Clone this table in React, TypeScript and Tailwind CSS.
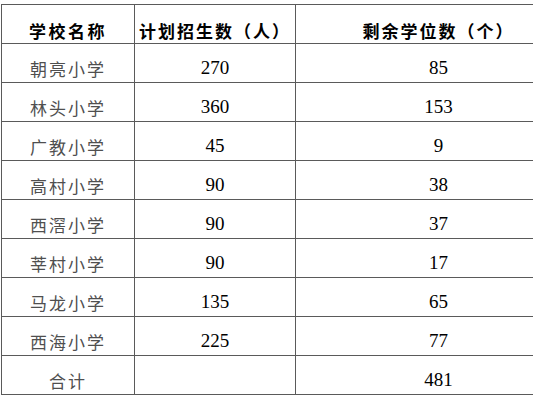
const rows: [string, string, string][] = [
  ["朝亮小学", "270", "85"],
  ["林头小学", "360", "153"],
  ["广教小学", "45", "9"],
  ["高村小学", "90", "38"],
  ["西滘小学", "90", "37"],
  ["莘村小学", "90", "17"],
  ["马龙小学", "135", "65"],
  ["西海小学", "225", "77"],
];

const cjk = "font-['Noto_Sans_CJK_SC',sans-serif]";
const num = "font-['Liberation_Serif',serif] text-[19px] text-black";
const cell = "flex h-full items-center justify-center pt-[11px] border-r border-[#5a5a5a]";

function Row({ name, plan, left }: { name: string; plan: string; left: string }) {
  return (
    <div className="flex h-[39px] border-b border-[#5a5a5a]">
      <div className={`${cell} w-[133px] ${cjk} text-[17px] tracking-[2px] text-[#4f4f4f]`}>{name}</div>
      <div className={`${cell} w-[161px] ${num}`}>{plan}</div>
      <div className={`${cell} w-[286px] ${num}`}>{left}</div>
    </div>
  );
}

export default function App() {
  return (
    <div className="h-[400px] w-[533px] overflow-hidden bg-white">
      <div className="ml-[1px] mt-[4px] w-[581px] border-l border-t border-[#5a5a5a]">
        <div className={`flex h-[39px] border-b border-[#5a5a5a] ${cjk} text-[17px] font-bold text-black`}>
          <div className={`${cell} w-[133px] pt-[13px] tracking-[2.5px]`}>学校名称</div>
          <div className={`${cell} w-[161px] pt-[13px] tracking-[2px]`}>计划招生数（人）</div>
          <div className={`${cell} w-[286px] pt-[13px] tracking-[2px]`}>剩余学位数（个）</div>
        </div>
        {rows.map(([n, p, l]) => (
          <Row key={n} name={n} plan={p} left={l} />
        ))}
        <div className="flex h-[39px] border-b border-[#5a5a5a]">
          <div className={`${cell} w-[133px] ${cjk} text-[17px] tracking-[2px] text-[#4f4f4f]`}>合计</div>
          <div className={`${cell} w-[161px]`} />
          <div className={`${cell} w-[286px] ${num}`}>481</div>
        </div>
      </div>
    </div>
  );
}
